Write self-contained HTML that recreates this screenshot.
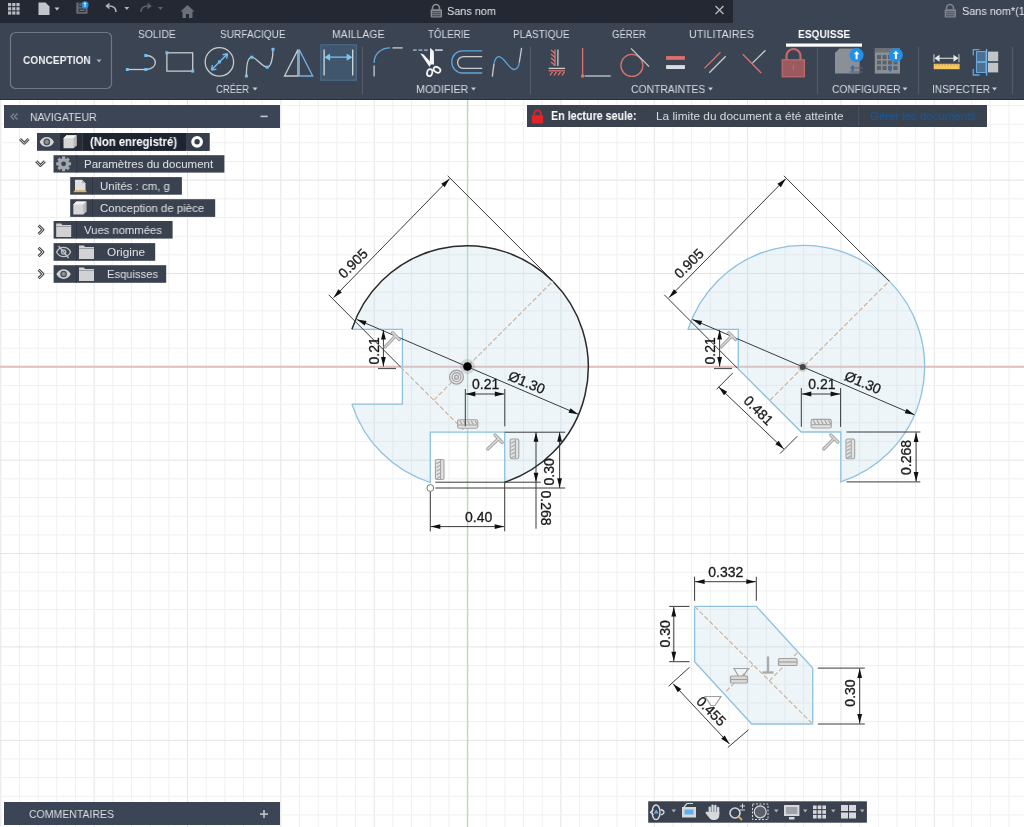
<!DOCTYPE html>
<html><head><meta charset="utf-8">
<style>
*{margin:0;padding:0;box-sizing:border-box}
html,body{width:1024px;height:827px;overflow:hidden;background:#fff;font-family:"Liberation Sans",sans-serif}
svg{position:absolute;left:0;top:0;overflow:visible}
div,svg{will-change:transform}
#topbar{position:absolute;left:0;top:0;width:1024px;height:23px;background:#3b4453}
#tabdark{position:absolute;left:0;top:0;width:733px;height:23px;background:#232833}
#toolbar{position:absolute;left:0;top:23px;width:1024px;height:77px;background:#3b4453;border-bottom:1px solid #2a303a}
.tt{position:absolute;top:5px;font-size:11.5px;line-height:12px;color:#e6e7e9;white-space:nowrap}
.tab{position:absolute;top:28.7px;font-size:11px;line-height:11px;color:#dadde2;white-space:nowrap;letter-spacing:0.1px}
.tab.act{color:#fff;font-weight:bold}
.grp{position:absolute;top:84px;font-size:11px;line-height:11px;color:#d8dbe0;white-space:nowrap}
.concep{position:absolute;left:22.6px;top:54.5px;font-size:11.5px;line-height:11px;font-weight:bold;color:#f0f1f3;white-space:nowrap}
.nvh{position:absolute;left:4px;top:105px;width:276px;height:22.7px;background:#3c4555}
.cmt{position:absolute;left:4px;top:802.3px;width:276px;height:22.9px;background:#3c4555}
.nvt{position:absolute;font-size:11.5px;line-height:12px;color:#dcdfe3;white-space:nowrap}
.nvr{position:absolute;font-size:11.5px;line-height:13px;color:#e0e2e5;white-space:nowrap}
.nvr.b{font-weight:bold;color:#fff;font-size:12px}
.ban{position:absolute;left:527px;top:105.2px;width:460px;height:21.8px;background:#3a4250}
.bt{position:absolute;top:109.5px;font-size:11.5px;line-height:13px;color:#d8dadd;white-space:nowrap}
.bt.b{font-weight:bold;color:#fff;font-size:12px}
.bt.lnk{color:#1b5a92}
</style></head><body>
<svg width="1024" height="827" viewBox="0 0 1024 827">
<line x1="0.80" y1="100" x2="0.80" y2="827" stroke="#e4e4e4"/>
<line x1="19.47" y1="100" x2="19.47" y2="827" stroke="#f0f0f0"/>
<line x1="38.14" y1="100" x2="38.14" y2="827" stroke="#f0f0f0"/>
<line x1="56.81" y1="100" x2="56.81" y2="827" stroke="#f0f0f0"/>
<line x1="75.48" y1="100" x2="75.48" y2="827" stroke="#f0f0f0"/>
<line x1="94.15" y1="100" x2="94.15" y2="827" stroke="#e4e4e4"/>
<line x1="112.82" y1="100" x2="112.82" y2="827" stroke="#f0f0f0"/>
<line x1="131.49" y1="100" x2="131.49" y2="827" stroke="#f0f0f0"/>
<line x1="150.16" y1="100" x2="150.16" y2="827" stroke="#f0f0f0"/>
<line x1="168.83" y1="100" x2="168.83" y2="827" stroke="#f0f0f0"/>
<line x1="187.50" y1="100" x2="187.50" y2="827" stroke="#e4e4e4"/>
<line x1="206.17" y1="100" x2="206.17" y2="827" stroke="#f0f0f0"/>
<line x1="224.84" y1="100" x2="224.84" y2="827" stroke="#f0f0f0"/>
<line x1="243.51" y1="100" x2="243.51" y2="827" stroke="#f0f0f0"/>
<line x1="262.18" y1="100" x2="262.18" y2="827" stroke="#f0f0f0"/>
<line x1="280.85" y1="100" x2="280.85" y2="827" stroke="#e4e4e4"/>
<line x1="299.52" y1="100" x2="299.52" y2="827" stroke="#f0f0f0"/>
<line x1="318.19" y1="100" x2="318.19" y2="827" stroke="#f0f0f0"/>
<line x1="336.86" y1="100" x2="336.86" y2="827" stroke="#f0f0f0"/>
<line x1="355.53" y1="100" x2="355.53" y2="827" stroke="#f0f0f0"/>
<line x1="374.20" y1="100" x2="374.20" y2="827" stroke="#e4e4e4"/>
<line x1="392.87" y1="100" x2="392.87" y2="827" stroke="#f0f0f0"/>
<line x1="411.54" y1="100" x2="411.54" y2="827" stroke="#f0f0f0"/>
<line x1="430.21" y1="100" x2="430.21" y2="827" stroke="#f0f0f0"/>
<line x1="448.88" y1="100" x2="448.88" y2="827" stroke="#f0f0f0"/>
<line x1="467.55" y1="100" x2="467.55" y2="827" stroke="#e4e4e4"/>
<line x1="486.22" y1="100" x2="486.22" y2="827" stroke="#f0f0f0"/>
<line x1="504.89" y1="100" x2="504.89" y2="827" stroke="#f0f0f0"/>
<line x1="523.56" y1="100" x2="523.56" y2="827" stroke="#f0f0f0"/>
<line x1="542.23" y1="100" x2="542.23" y2="827" stroke="#f0f0f0"/>
<line x1="560.90" y1="100" x2="560.90" y2="827" stroke="#e4e4e4"/>
<line x1="579.57" y1="100" x2="579.57" y2="827" stroke="#f0f0f0"/>
<line x1="598.24" y1="100" x2="598.24" y2="827" stroke="#f0f0f0"/>
<line x1="616.91" y1="100" x2="616.91" y2="827" stroke="#f0f0f0"/>
<line x1="635.58" y1="100" x2="635.58" y2="827" stroke="#f0f0f0"/>
<line x1="654.25" y1="100" x2="654.25" y2="827" stroke="#e4e4e4"/>
<line x1="672.92" y1="100" x2="672.92" y2="827" stroke="#f0f0f0"/>
<line x1="691.59" y1="100" x2="691.59" y2="827" stroke="#f0f0f0"/>
<line x1="710.26" y1="100" x2="710.26" y2="827" stroke="#f0f0f0"/>
<line x1="728.93" y1="100" x2="728.93" y2="827" stroke="#f0f0f0"/>
<line x1="747.60" y1="100" x2="747.60" y2="827" stroke="#e4e4e4"/>
<line x1="766.27" y1="100" x2="766.27" y2="827" stroke="#f0f0f0"/>
<line x1="784.94" y1="100" x2="784.94" y2="827" stroke="#f0f0f0"/>
<line x1="803.61" y1="100" x2="803.61" y2="827" stroke="#f0f0f0"/>
<line x1="822.28" y1="100" x2="822.28" y2="827" stroke="#f0f0f0"/>
<line x1="840.95" y1="100" x2="840.95" y2="827" stroke="#e4e4e4"/>
<line x1="859.62" y1="100" x2="859.62" y2="827" stroke="#f0f0f0"/>
<line x1="878.29" y1="100" x2="878.29" y2="827" stroke="#f0f0f0"/>
<line x1="896.96" y1="100" x2="896.96" y2="827" stroke="#f0f0f0"/>
<line x1="915.63" y1="100" x2="915.63" y2="827" stroke="#f0f0f0"/>
<line x1="934.30" y1="100" x2="934.30" y2="827" stroke="#e4e4e4"/>
<line x1="952.97" y1="100" x2="952.97" y2="827" stroke="#f0f0f0"/>
<line x1="971.64" y1="100" x2="971.64" y2="827" stroke="#f0f0f0"/>
<line x1="990.31" y1="100" x2="990.31" y2="827" stroke="#f0f0f0"/>
<line x1="1008.98" y1="100" x2="1008.98" y2="827" stroke="#f0f0f0"/>
<line x1="0" y1="105.47" x2="1024" y2="105.47" stroke="#f0f0f0"/>
<line x1="0" y1="124.14" x2="1024" y2="124.14" stroke="#f0f0f0"/>
<line x1="0" y1="142.81" x2="1024" y2="142.81" stroke="#f0f0f0"/>
<line x1="0" y1="161.48" x2="1024" y2="161.48" stroke="#f0f0f0"/>
<line x1="0" y1="180.15" x2="1024" y2="180.15" stroke="#e4e4e4"/>
<line x1="0" y1="198.82" x2="1024" y2="198.82" stroke="#f0f0f0"/>
<line x1="0" y1="217.49" x2="1024" y2="217.49" stroke="#f0f0f0"/>
<line x1="0" y1="236.16" x2="1024" y2="236.16" stroke="#f0f0f0"/>
<line x1="0" y1="254.83" x2="1024" y2="254.83" stroke="#f0f0f0"/>
<line x1="0" y1="273.50" x2="1024" y2="273.50" stroke="#e4e4e4"/>
<line x1="0" y1="292.17" x2="1024" y2="292.17" stroke="#f0f0f0"/>
<line x1="0" y1="310.84" x2="1024" y2="310.84" stroke="#f0f0f0"/>
<line x1="0" y1="329.51" x2="1024" y2="329.51" stroke="#f0f0f0"/>
<line x1="0" y1="348.18" x2="1024" y2="348.18" stroke="#f0f0f0"/>
<line x1="0" y1="366.85" x2="1024" y2="366.85" stroke="#e4e4e4"/>
<line x1="0" y1="385.52" x2="1024" y2="385.52" stroke="#f0f0f0"/>
<line x1="0" y1="404.19" x2="1024" y2="404.19" stroke="#f0f0f0"/>
<line x1="0" y1="422.86" x2="1024" y2="422.86" stroke="#f0f0f0"/>
<line x1="0" y1="441.53" x2="1024" y2="441.53" stroke="#f0f0f0"/>
<line x1="0" y1="460.20" x2="1024" y2="460.20" stroke="#e4e4e4"/>
<line x1="0" y1="478.87" x2="1024" y2="478.87" stroke="#f0f0f0"/>
<line x1="0" y1="497.54" x2="1024" y2="497.54" stroke="#f0f0f0"/>
<line x1="0" y1="516.21" x2="1024" y2="516.21" stroke="#f0f0f0"/>
<line x1="0" y1="534.88" x2="1024" y2="534.88" stroke="#f0f0f0"/>
<line x1="0" y1="553.55" x2="1024" y2="553.55" stroke="#e4e4e4"/>
<line x1="0" y1="572.22" x2="1024" y2="572.22" stroke="#f0f0f0"/>
<line x1="0" y1="590.89" x2="1024" y2="590.89" stroke="#f0f0f0"/>
<line x1="0" y1="609.56" x2="1024" y2="609.56" stroke="#f0f0f0"/>
<line x1="0" y1="628.23" x2="1024" y2="628.23" stroke="#f0f0f0"/>
<line x1="0" y1="646.90" x2="1024" y2="646.90" stroke="#e4e4e4"/>
<line x1="0" y1="665.57" x2="1024" y2="665.57" stroke="#f0f0f0"/>
<line x1="0" y1="684.24" x2="1024" y2="684.24" stroke="#f0f0f0"/>
<line x1="0" y1="702.91" x2="1024" y2="702.91" stroke="#f0f0f0"/>
<line x1="0" y1="721.58" x2="1024" y2="721.58" stroke="#f0f0f0"/>
<line x1="0" y1="740.25" x2="1024" y2="740.25" stroke="#e4e4e4"/>
<line x1="0" y1="758.92" x2="1024" y2="758.92" stroke="#f0f0f0"/>
<line x1="0" y1="777.59" x2="1024" y2="777.59" stroke="#f0f0f0"/>
<line x1="0" y1="796.26" x2="1024" y2="796.26" stroke="#f0f0f0"/>
<line x1="0" y1="814.93" x2="1024" y2="814.93" stroke="#f0f0f0"/>
<line x1="0" y1="366.85" x2="1024" y2="366.85" stroke="#e3bdbd" stroke-width="2"/>
<line x1="467.55" y1="100" x2="467.55" y2="827" stroke="#b6dcb6" stroke-width="1.4"/>
<g font-family="Liberation Sans, sans-serif"><path d="M351.9,329.3 A121.2,121.2 0 1 1 504.7,482.2 L504.7,432.2 L430.3,432.2 L430.3,482.5 A121.2,121.2 0 0 1 351.9,404.1 L402.4,404.1 L402.4,329.3 Z" fill="#b7d7e7" fill-opacity="0.25"/>
<path d="M351.9,329.3 H402.4 V404.1 H351.9" fill="none" stroke="#8fc2de" stroke-width="1.3"/>
<path d="M351.9,404.1 A121.2,121.2 0 0 0 430.3,482.5 V432.2 H504.7 V482.2" fill="none" stroke="#8fc2de" stroke-width="1.3"/>
<path d="M351.9,329.3 A121.2,121.2 0 1 1 504.7,482.2" fill="none" stroke="#2a2a2a" stroke-width="1.5"/>
<line x1="433.80" y1="400.20" x2="553.20" y2="280.80" stroke="#ffffff" stroke-width="2.6" stroke-opacity="0.3"/><line x1="433.80" y1="400.20" x2="553.20" y2="280.80" stroke="#cfb7a1" stroke-width="1.3" stroke-dasharray="5 2"/>
<line x1="400.50" y1="366.90" x2="464.60" y2="431.00" stroke="#ffffff" stroke-width="2.6" stroke-opacity="0.3"/><line x1="400.50" y1="366.90" x2="464.60" y2="431.00" stroke="#cfb7a1" stroke-width="1.3" stroke-dasharray="5 2"/>
<g fill="none" stroke="#a2a2a2" stroke-width="1.1"><rect x="457.6" y="419.8" width="20.2" height="8.4" rx="1.6" fill="#e2e2e2"/><line x1="458.2" y1="425.0" x2="477.2" y2="425.0"/><line x1="459.8" y1="420.8" x2="462.0" y2="424.4"/><line x1="463.6" y1="420.8" x2="465.8" y2="424.4"/><line x1="467.4" y1="420.8" x2="469.6" y2="424.4"/><line x1="471.2" y1="420.8" x2="473.4" y2="424.4"/><line x1="475.0" y1="420.8" x2="477.2" y2="424.4"/></g>
<g fill="none" stroke="#a2a2a2" stroke-width="1.1"><rect x="510.2" y="439.0" width="8.6" height="19.7" rx="1.6" fill="#e2e2e2"/><line x1="515.4" y1="439.6" x2="515.4" y2="458.1"/><line x1="511.2" y1="443.4" x2="514.7" y2="441.2"/><line x1="511.2" y1="447.1" x2="514.7" y2="444.9"/><line x1="511.2" y1="450.8" x2="514.7" y2="448.6"/><line x1="511.2" y1="454.4" x2="514.7" y2="452.2"/><line x1="511.2" y1="458.1" x2="514.7" y2="455.9"/></g>
<g fill="none" stroke="#a2a2a2" stroke-width="1.1"><rect x="435.4" y="459.5" width="8.6" height="20" rx="1.6" fill="#e2e2e2"/><line x1="440.6" y1="460.1" x2="440.6" y2="478.9"/><line x1="436.4" y1="463.9" x2="439.9" y2="461.7"/><line x1="436.4" y1="467.6" x2="439.9" y2="465.4"/><line x1="436.4" y1="471.4" x2="439.9" y2="469.2"/><line x1="436.4" y1="475.1" x2="439.9" y2="472.9"/><line x1="436.4" y1="478.9" x2="439.9" y2="476.7"/></g>
<line x1="328.70" y1="294.80" x2="400.50" y2="366.90" stroke="#3a3a3a" stroke-width="1" />
<line x1="447.70" y1="175.80" x2="553.20" y2="281.30" stroke="#3a3a3a" stroke-width="1" />
<line x1="333.50" y1="297.70" x2="449.60" y2="178.70" stroke="#3a3a3a" stroke-width="1"/><path d="M333.50,297.70 L338.42,289.22 L341.85,292.58 Z" fill="#111"/><path d="M449.60,178.70 L444.68,187.18 L441.25,183.82 Z" fill="#111"/>
<text x="0" y="0" transform="translate(352.90,263.30) rotate(-45)" text-anchor="middle" dominant-baseline="central" font-size="14" fill="#1a1a1a" stroke="#1a1a1a" stroke-width="0.3">0.905</text>
<line x1="356.90" y1="319.50" x2="578.20" y2="414.20" stroke="#3a3a3a" stroke-width="1"/><path d="M356.90,319.50 L366.58,321.03 L364.69,325.44 Z" fill="#111"/><path d="M578.20,414.20 L568.52,412.67 L570.41,408.26 Z" fill="#111"/>
<text x="0" y="0" transform="translate(526.80,382.30) rotate(23.2)" text-anchor="middle" dominant-baseline="central" font-size="14" fill="#1a1a1a" stroke="#1a1a1a" stroke-width="0.3">Ø1.30</text>
<line x1="383.40" y1="330.00" x2="383.40" y2="366.50" stroke="#3a3a3a" stroke-width="1" />
<path d="M383.40,330.00 L385.80,339.50 L381.00,339.50 Z" fill="#111"/>
<path d="M383.40,366.50 L381.00,357.00 L385.80,357.00 Z" fill="#111"/>
<line x1="378.00" y1="368.50" x2="396.00" y2="368.50" stroke="#555" stroke-width="1.2" />
<text x="0" y="0" transform="translate(373.90,350.80) rotate(-90)" text-anchor="middle" dominant-baseline="central" font-size="14" fill="#1a1a1a" stroke="#1a1a1a" stroke-width="0.3">0.21</text>
<path d="M385.1,346.9 L395.4,336.1 M392.5,332.7 L399.3,339.5" stroke="#a6a6a6" stroke-width="3.3" stroke-linecap="round" fill="none"/><path d="M385.1,346.9 L395.4,336.1 M392.5,332.7 L399.3,339.5" stroke="#dcdcdc" stroke-width="1.3" stroke-linecap="round" fill="none"/>
<line x1="465.30" y1="389.00" x2="465.30" y2="426.30" stroke="#3a3a3a" stroke-width="1" />
<line x1="504.80" y1="389.00" x2="504.80" y2="426.30" stroke="#3a3a3a" stroke-width="1" />
<line x1="465.80" y1="394.00" x2="504.30" y2="394.00" stroke="#3a3a3a" stroke-width="1"/><path d="M465.80,394.00 L475.30,391.60 L475.30,396.40 Z" fill="#111"/><path d="M504.30,394.00 L494.80,396.40 L494.80,391.60 Z" fill="#111"/>
<text x="0" y="0" transform="translate(485.70,384.20) rotate(0)" text-anchor="middle" dominant-baseline="central" font-size="14" fill="#1a1a1a" stroke="#1a1a1a" stroke-width="0.3">0.21</text>
<line x1="504.70" y1="432.20" x2="565.20" y2="432.20" stroke="#3a3a3a" stroke-width="1" />
<line x1="435.40" y1="482.20" x2="540.60" y2="482.20" stroke="#3a3a3a" stroke-width="1" />
<line x1="435.40" y1="488.00" x2="565.20" y2="488.00" stroke="#3a3a3a" stroke-width="1" />
<line x1="536.00" y1="432.30" x2="536.00" y2="528.70" stroke="#3a3a3a" stroke-width="1" />
<path d="M536.00,432.30 L538.40,441.80 L533.60,441.80 Z" fill="#111"/>
<path d="M536.00,482.20 L533.60,472.70 L538.40,472.70 Z" fill="#111"/>
<line x1="559.60" y1="432.30" x2="559.60" y2="487.80" stroke="#3a3a3a" stroke-width="1"/><path d="M559.60,432.30 L562.00,441.80 L557.20,441.80 Z" fill="#111"/><path d="M559.60,487.80 L557.20,478.30 L562.00,478.30 Z" fill="#111"/>
<text x="0" y="0" transform="translate(549.20,471.90) rotate(-90)" text-anchor="middle" dominant-baseline="central" font-size="14" fill="#1a1a1a" stroke="#1a1a1a" stroke-width="0.3">0.30</text>
<text x="0" y="0" transform="translate(546.00,508.00) rotate(90)" text-anchor="middle" dominant-baseline="central" font-size="14" fill="#1a1a1a" stroke="#1a1a1a" stroke-width="0.3">0.268</text>
<line x1="430.30" y1="491.00" x2="430.30" y2="531.30" stroke="#3a3a3a" stroke-width="1" />
<line x1="504.70" y1="482.20" x2="504.70" y2="531.30" stroke="#3a3a3a" stroke-width="1" />
<line x1="430.80" y1="526.60" x2="504.20" y2="526.60" stroke="#3a3a3a" stroke-width="1"/><path d="M430.80,526.60 L440.30,524.20 L440.30,529.00 Z" fill="#111"/><path d="M504.20,526.60 L494.70,529.00 L494.70,524.20 Z" fill="#111"/>
<text x="0" y="0" transform="translate(478.60,516.60) rotate(0)" text-anchor="middle" dominant-baseline="central" font-size="14" fill="#1a1a1a" stroke="#1a1a1a" stroke-width="0.3">0.40</text>
<circle cx="430.3" cy="488" r="3.4" fill="#fff" stroke="#777" stroke-width="1"/>
<path d="M487.8,449 L498,439.3 M495,435 L502.2,442.5" stroke="#a6a6a6" stroke-width="3.3" stroke-linecap="round" fill="none"/><path d="M487.8,449 L498,439.3 M495,435 L502.2,442.5" stroke="#dcdcdc" stroke-width="1.3" stroke-linecap="round" fill="none"/>
<circle cx="467.5" cy="366.5" r="7.5" fill="#9a9a9a" fill-opacity="0.35"/>
<circle cx="467.5" cy="366.5" r="4.3" fill="#000"/>
<g fill="none" stroke="#a3a3a3" stroke-width="1.4"><circle cx="456.5" cy="377.2" r="6.9" fill="#ececec" fill-opacity="0.6"/><circle cx="456.5" cy="377.2" r="4.4"/><circle cx="456.5" cy="377.2" r="1.9"/></g><path d="M688.1,329.3 A121.2,121.2 0 1 1 840.8,481.9 L840.8,432 L801.2,432 L738.3,369 L738.3,329.3 Z" fill="#b7d7e7" fill-opacity="0.25" stroke="#8fc2de" stroke-width="1.3"/>
<line x1="769.90" y1="400.30" x2="889.40" y2="280.80" stroke="#ffffff" stroke-width="2.6" stroke-opacity="0.3"/><line x1="769.90" y1="400.30" x2="889.40" y2="280.80" stroke="#cfb7a1" stroke-width="1.3" stroke-dasharray="5 2"/>
<line x1="664.30" y1="294.80" x2="737.60" y2="368.40" stroke="#3a3a3a" stroke-width="1" />
<line x1="783.90" y1="175.80" x2="889.40" y2="281.30" stroke="#3a3a3a" stroke-width="1" />
<line x1="668.90" y1="297.70" x2="785.80" y2="178.70" stroke="#3a3a3a" stroke-width="1"/><path d="M668.90,297.70 L673.85,289.24 L677.27,292.60 Z" fill="#111"/><path d="M785.80,178.70 L780.85,187.16 L777.43,183.80 Z" fill="#111"/>
<text x="0" y="0" transform="translate(688.90,263.30) rotate(-45)" text-anchor="middle" dominant-baseline="central" font-size="14" fill="#1a1a1a" stroke="#1a1a1a" stroke-width="0.3">0.905</text>
<line x1="692.50" y1="319.50" x2="914.40" y2="414.80" stroke="#3a3a3a" stroke-width="1"/><path d="M692.50,319.50 L702.18,321.04 L700.28,325.45 Z" fill="#111"/><path d="M914.40,414.80 L904.72,413.26 L906.62,408.85 Z" fill="#111"/>
<text x="0" y="0" transform="translate(862.90,382.30) rotate(23.2)" text-anchor="middle" dominant-baseline="central" font-size="14" fill="#1a1a1a" stroke="#1a1a1a" stroke-width="0.3">Ø1.30</text>
<line x1="719.60" y1="330.00" x2="719.60" y2="366.50" stroke="#3a3a3a" stroke-width="1" />
<path d="M719.60,330.00 L722.00,339.50 L717.20,339.50 Z" fill="#111"/>
<path d="M719.60,366.50 L717.20,357.00 L722.00,357.00 Z" fill="#111"/>
<line x1="714.00" y1="368.50" x2="732.00" y2="368.50" stroke="#555" stroke-width="1.2" />
<text x="0" y="0" transform="translate(710.10,350.80) rotate(-90)" text-anchor="middle" dominant-baseline="central" font-size="14" fill="#1a1a1a" stroke="#1a1a1a" stroke-width="0.3">0.21</text>
<path d="M721.3,346.9 L731.6,336.1 M728.7,332.7 L735.5,339.5" stroke="#a6a6a6" stroke-width="3.3" stroke-linecap="round" fill="none"/><path d="M721.3,346.9 L731.6,336.1 M728.7,332.7 L735.5,339.5" stroke="#dcdcdc" stroke-width="1.3" stroke-linecap="round" fill="none"/>
<line x1="732.80" y1="372.90" x2="716.60" y2="389.30" stroke="#3a3a3a" stroke-width="1" />
<line x1="797.30" y1="436.20" x2="780.00" y2="453.60" stroke="#3a3a3a" stroke-width="1" />
<line x1="718.70" y1="387.00" x2="783.90" y2="449.00" stroke="#3a3a3a" stroke-width="1"/><path d="M718.70,387.00 L727.24,391.81 L723.93,395.29 Z" fill="#111"/><path d="M783.90,449.00 L775.36,444.19 L778.67,440.71 Z" fill="#111"/>
<text x="0" y="0" transform="translate(758.60,410.40) rotate(45)" text-anchor="middle" dominant-baseline="central" font-size="14" fill="#1a1a1a" stroke="#1a1a1a" stroke-width="0.3">0.481</text>
<line x1="801.30" y1="388.10" x2="801.30" y2="426.80" stroke="#3a3a3a" stroke-width="1" />
<line x1="840.60" y1="388.10" x2="840.60" y2="426.80" stroke="#3a3a3a" stroke-width="1" />
<line x1="801.80" y1="394.00" x2="840.10" y2="394.00" stroke="#3a3a3a" stroke-width="1"/><path d="M801.80,394.00 L811.30,391.60 L811.30,396.40 Z" fill="#111"/><path d="M840.10,394.00 L830.60,396.40 L830.60,391.60 Z" fill="#111"/>
<text x="0" y="0" transform="translate(821.90,384.20) rotate(0)" text-anchor="middle" dominant-baseline="central" font-size="14" fill="#1a1a1a" stroke="#1a1a1a" stroke-width="0.3">0.21</text>
<line x1="846.50" y1="432.00" x2="920.30" y2="432.00" stroke="#3a3a3a" stroke-width="1" />
<line x1="846.50" y1="481.90" x2="920.30" y2="481.90" stroke="#3a3a3a" stroke-width="1" />
<line x1="916.10" y1="432.50" x2="916.10" y2="481.40" stroke="#3a3a3a" stroke-width="1"/><path d="M916.10,432.50 L918.50,442.00 L913.70,442.00 Z" fill="#111"/><path d="M916.10,481.40 L913.70,471.90 L918.50,471.90 Z" fill="#111"/>
<text x="0" y="0" transform="translate(906.20,457.50) rotate(-90)" text-anchor="middle" dominant-baseline="central" font-size="14" fill="#1a1a1a" stroke="#1a1a1a" stroke-width="0.3">0.268</text>
<g fill="none" stroke="#a2a2a2" stroke-width="1.1"><rect x="811.1" y="419.4" width="20.2" height="8.6" rx="1.6" fill="#e2e2e2"/><line x1="811.7" y1="424.7" x2="830.7" y2="424.7"/><line x1="813.3" y1="420.4" x2="815.5" y2="424.1"/><line x1="817.1" y1="420.4" x2="819.3" y2="424.1"/><line x1="820.9" y1="420.4" x2="823.1" y2="424.1"/><line x1="824.7" y1="420.4" x2="826.9" y2="424.1"/><line x1="828.5" y1="420.4" x2="830.7" y2="424.1"/></g>
<g fill="none" stroke="#a2a2a2" stroke-width="1.1"><rect x="846.0" y="439.0" width="8.7" height="19.8" rx="1.6" fill="#e2e2e2"/><line x1="851.2" y1="439.6" x2="851.2" y2="458.2"/><line x1="847.0" y1="443.4" x2="850.5" y2="441.2"/><line x1="847.0" y1="447.1" x2="850.5" y2="444.9"/><line x1="847.0" y1="450.8" x2="850.5" y2="448.6"/><line x1="847.0" y1="454.5" x2="850.5" y2="452.3"/><line x1="847.0" y1="458.2" x2="850.5" y2="456.0"/></g>
<path d="M823.8,449 L834,438.6 M830.8,435 L837.8,442" stroke="#a6a6a6" stroke-width="3.3" stroke-linecap="round" fill="none"/><path d="M823.8,449 L834,438.6 M830.8,435 L837.8,442" stroke="#dcdcdc" stroke-width="1.3" stroke-linecap="round" fill="none"/>
<circle cx="802.7" cy="367.0" r="5" fill="#888" fill-opacity="0.3"/>
<circle cx="802.7" cy="367.0" r="3" fill="#444"/><path d="M694.6,606.4 L756.3,606.4 L812.7,668.1 L812.7,724 L751.7,724 L694.6,661.7 Z" fill="#b7d7e7" fill-opacity="0.25" stroke="#8fc2de" stroke-width="1.3"/>
<line x1="694.60" y1="606.40" x2="812.70" y2="724.00" stroke="#ffffff" stroke-width="2.6" stroke-opacity="0.3"/><line x1="694.60" y1="606.40" x2="812.70" y2="724.00" stroke="#cfb7a1" stroke-width="1.3" stroke-dasharray="5 2"/>
<line x1="726.10" y1="691.20" x2="753.00" y2="664.90" stroke="#ffffff" stroke-width="2.6" stroke-opacity="0.3"/><line x1="726.10" y1="691.20" x2="753.00" y2="664.90" stroke="#cfb7a1" stroke-width="1.3" stroke-dasharray="5 2"/>
<line x1="769.10" y1="681.00" x2="797.60" y2="652.50" stroke="#ffffff" stroke-width="2.6" stroke-opacity="0.3"/><line x1="769.10" y1="681.00" x2="797.60" y2="652.50" stroke="#cfb7a1" stroke-width="1.3" stroke-dasharray="5 2"/>
<line x1="694.60" y1="576.70" x2="694.60" y2="600.80" stroke="#3a3a3a" stroke-width="1" />
<line x1="756.30" y1="576.70" x2="756.30" y2="600.80" stroke="#3a3a3a" stroke-width="1" />
<line x1="695.10" y1="581.70" x2="755.80" y2="581.70" stroke="#3a3a3a" stroke-width="1"/><path d="M695.10,581.70 L704.60,579.30 L704.60,584.10 Z" fill="#111"/><path d="M755.80,581.70 L746.30,584.10 L746.30,579.30 Z" fill="#111"/>
<text x="0" y="0" transform="translate(725.80,572.20) rotate(0)" text-anchor="middle" dominant-baseline="central" font-size="14" fill="#1a1a1a" stroke="#1a1a1a" stroke-width="0.3">0.332</text>
<line x1="669.20" y1="606.40" x2="689.50" y2="606.40" stroke="#3a3a3a" stroke-width="1" />
<line x1="669.20" y1="661.70" x2="689.50" y2="661.70" stroke="#3a3a3a" stroke-width="1" />
<line x1="673.80" y1="606.90" x2="673.80" y2="661.20" stroke="#3a3a3a" stroke-width="1"/><path d="M673.80,606.90 L676.20,616.40 L671.40,616.40 Z" fill="#111"/><path d="M673.80,661.20 L671.40,651.70 L676.20,651.70 Z" fill="#111"/>
<text x="0" y="0" transform="translate(665.40,633.80) rotate(-90)" text-anchor="middle" dominant-baseline="central" font-size="14" fill="#1a1a1a" stroke="#1a1a1a" stroke-width="0.3">0.30</text>
<line x1="817.80" y1="668.10" x2="864.80" y2="668.10" stroke="#3a3a3a" stroke-width="1" />
<line x1="817.80" y1="724.00" x2="864.80" y2="724.00" stroke="#3a3a3a" stroke-width="1" />
<line x1="859.70" y1="668.60" x2="859.70" y2="723.50" stroke="#3a3a3a" stroke-width="1"/><path d="M859.70,668.60 L862.10,678.10 L857.30,678.10 Z" fill="#111"/><path d="M859.70,723.50 L857.30,714.00 L862.10,714.00 Z" fill="#111"/>
<text x="0" y="0" transform="translate(850.30,693.00) rotate(-90)" text-anchor="middle" dominant-baseline="central" font-size="14" fill="#1a1a1a" stroke="#1a1a1a" stroke-width="0.3">0.30</text>
<line x1="689.50" y1="667.30" x2="668.60" y2="686.20" stroke="#3a3a3a" stroke-width="1" />
<line x1="748.50" y1="729.80" x2="727.80" y2="747.50" stroke="#3a3a3a" stroke-width="1" />
<line x1="673.00" y1="683.70" x2="729.50" y2="744.00" stroke="#3a3a3a" stroke-width="1"/><path d="M673.00,683.70 L681.25,688.99 L677.74,692.27 Z" fill="#111"/><path d="M729.50,744.00 L721.25,738.71 L724.76,735.43 Z" fill="#111"/>
<text x="0" y="0" transform="translate(711.30,711.20) rotate(45)" text-anchor="middle" dominant-baseline="central" font-size="14" fill="#1a1a1a" stroke="#1a1a1a" stroke-width="0.3">0.455</text>
<g fill="none" stroke="#a0a0a0" stroke-width="1.2"><path d="M734,668.5 h14 l-5,8.5 h-4 z"/><rect x="730.5" y="676" width="17" height="7" rx="1" fill="#dcdcdc"/><line x1="731" y1="679.5" x2="747" y2="679.5"/><path d="M705,696.5 h16 l-6,9 h-4 z"/><rect x="778.5" y="658.5" width="18.5" height="7" rx="1" fill="#dcdcdc"/><line x1="779" y1="662" x2="796.5" y2="662"/></g>
<g stroke="#ababab" stroke-width="2.4"><line x1="768" y1="656.5" x2="768" y2="672"/><line x1="762.5" y1="672.5" x2="773.5" y2="672.5"/></g></g>
</svg>
<div id="topbar"></div>
<div id="tabdark"></div>
<div id="toolbar"></div>

<svg width="1024" height="100" viewBox="0 0 1024 100" style="position:absolute;left:0;top:0">
<!-- top bar icons -->
<g fill="#b9bdc3">
<rect x="8.0" y="3.0" width="3.2" height="3.2"/><rect x="8.0" y="7.2" width="3.2" height="3.2"/><rect x="8.0" y="11.4" width="3.2" height="3.2"/><rect x="12.2" y="3.0" width="3.2" height="3.2"/><rect x="12.2" y="7.2" width="3.2" height="3.2"/><rect x="12.2" y="11.4" width="3.2" height="3.2"/><rect x="16.4" y="3.0" width="3.2" height="3.2"/><rect x="16.4" y="7.2" width="3.2" height="3.2"/><rect x="16.4" y="11.4" width="3.2" height="3.2"/>
</g>
<path d="M38.5,2.5 h7 l4,4 v8.5 h-11 z" fill="#c3c6cb"/>
<path d="M54.5,7.5 h5 l-2.5,3 z" fill="#c3c6cb"/>
<path d="M76.3,2.5 h8.5 l2.7,2.7 v8.5 h-11.2 z" fill="#666b74"/>
<rect x="78.6" y="2.5" width="6" height="4.6" fill="#232833"/>
<rect x="79.3" y="3.3" width="1.6" height="3" fill="#666b74"/>
<rect x="78.6" y="8.6" width="7" height="3.3" fill="#232833"/>
<rect x="79.4" y="9.5" width="5.4" height="1.5" fill="#666b74"/>
<circle cx="85" cy="4.8" r="3.6" fill="#2a8ee0"/>
<path d="M85,2.8 v4.2 M83.8,4 l1.2,-1.3 1.2,1.3" stroke="#fff" stroke-width="0.9" fill="none"/>
<path d="M116,12 q0,-6 -7,-6 h-2 m2.5,-2.5 l-3,2.5 3,2.5" stroke="#b0b4ba" stroke-width="1.6" fill="none"/>
<path d="M124.3,7 h5 l-2.5,3 z" fill="#b0b4ba"/>
<path d="M141,12 q0,-6 7,-6 h2 m-2.5,-2.5 l3,2.5 -3,2.5" stroke="#5e636b" stroke-width="1.6" fill="none"/>
<path d="M158,7 h5 l-2.5,3 z" fill="#5e636b"/>
<path d="M187.5,5 l7,6.5 h-2 v6.5 h-3.5 v-4 h-3 v4 h-3.5 v-6.5 h-2 z" fill="#6b7078"/>
<!-- tab lock -->
<path d="M432.5,9.5 v-1.5 a3.5,3.5 0 0 1 7,0 v1.5" stroke="#8a8e95" stroke-width="1.6" fill="none"/>
<rect x="430.7" y="9.3" width="11.3" height="8.3" rx="1" fill="#8a8e95"/>
<g stroke="#1f232b" stroke-width="0.8"><line x1="432" y1="11.8" x2="440.7" y2="11.8"/><line x1="432" y1="13.8" x2="440.7" y2="13.8"/><line x1="432" y1="15.8" x2="440.7" y2="15.8"/></g>
<path d="M715.5,6 l8,8 m0,-8 l-8,8" stroke="#b4b8be" stroke-width="1.4"/>
<path d="M946.5,9.5 v-1.5 a3.5,3.5 0 0 1 7,0 v1.5" stroke="#80858d" stroke-width="1.6" fill="none"/>
<rect x="944.7" y="9.3" width="11.3" height="8.3" rx="1" fill="#80858d"/>
<g stroke="#3c4453" stroke-width="0.8"><line x1="946" y1="11.8" x2="954.7" y2="11.8"/><line x1="946" y1="13.8" x2="954.7" y2="13.8"/><line x1="946" y1="15.8" x2="954.7" y2="15.8"/></g>

<!-- conception box -->
<rect x="10.5" y="32.5" width="101" height="56" rx="5" fill="none" stroke="#6e7889" stroke-width="1.2"/>
<path d="M96.5,59.5 h5 l-2.5,3 z" fill="#a9aeb5"/>
<!-- esquisse underline -->
<rect x="786" y="43.5" width="76" height="3.2" fill="#ffffff"/>
<!-- separators -->
<g stroke="#535b6a" stroke-width="1.2">
<line x1="362.5" y1="47" x2="362.5" y2="94"/>
<line x1="530.5" y1="47" x2="530.5" y2="94"/>
<line x1="817.5" y1="48" x2="817.5" y2="94"/>
<line x1="918.5" y1="47" x2="918.5" y2="94"/>
<line x1="1012.5" y1="47" x2="1012.5" y2="94"/>
</g>
<!-- creer icons -->
<g fill="none" stroke="#c9cbce" stroke-width="1.3">
<line x1="127.3" y1="69.5" x2="145.8" y2="69.5"/>
<path d="M145.8,55.5 C158.5,55.5 158.5,69.5 145.8,69.5"/>
<rect x="166.9" y="52.8" width="25.8" height="18.3"/>
<circle cx="219.4" cy="61.9" r="14.2"/>
<path d="M246.4,76 C246.4,66 248,57.2 251.7,57.2 C256,57.2 262,67.2 267.2,67.2 C271,67.2 273,58 273,49.3"/>
<path d="M298,49.6 L284.5,76 H298 Z"/>
</g>
<path d="M299.2,49.6 L312.7,76 H299.2 Z" fill="none" stroke="#6fb3e6" stroke-width="1.3"/>
<g fill="#6fc0f0">
<rect x="125.8" y="68" width="3" height="3"/><rect x="144.3" y="68" width="3" height="3"/><rect x="144.3" y="54" width="3" height="3"/>
<rect x="165.4" y="51.3" width="3" height="3"/><rect x="191.2" y="69.6" width="3" height="3"/>
<rect x="217.9" y="60.4" width="3" height="3"/>
<rect x="244.9" y="74.5" width="3" height="3"/><rect x="250.2" y="55.7" width="3" height="3"/><rect x="265.7" y="65.7" width="3" height="3"/><rect x="271.5" y="47.8" width="3" height="3"/>
</g>
<path d="M211.4,70.1 L227.6,53.7 M211.4,70.1 l1,-5 m-1,5 l5,-1 M227.6,53.7 l-5,1 m5,-1 l-1,5" stroke="#6fc0f0" stroke-width="1.4" fill="none"/>
<rect x="320.8" y="44.8" width="35.6" height="35.4" fill="#3f566d" stroke="#4f6f8e" stroke-width="1"/>
<g stroke="#d8dadc" stroke-width="1.3"><line x1="324.1" y1="49.6" x2="324.1" y2="75.4"/><line x1="352.7" y1="49.6" x2="352.7" y2="75.4"/></g>
<path d="M325.5,57.2 H351.3 M325.5,57.2 l4,-2.5 v5 z M351.3,57.2 l-4,-2.5 v5 z" stroke="#7cc6f2" stroke-width="1.2" fill="#7cc6f2"/>
<!-- modifier icons -->
<line x1="374.1" y1="65.4" x2="374.1" y2="76.6" stroke="#c9cbce" stroke-width="1.3"/>
<path d="M374.1,63 C374.1,54 381,47.9 390.2,47.9" stroke="#5fa6dc" stroke-width="1.3" fill="none"/>
<line x1="392.5" y1="47.9" x2="402.7" y2="47.9" stroke="#c9cbce" stroke-width="1.3"/>
<path d="M413,50.1 h3.7 m1.8,0 h3.9 m1.7,0 h3.7" stroke="#8aa0b8" stroke-width="1.7"/>
<path d="M435,50.1 h7.7" stroke="#c9cbce" stroke-width="1.7"/>
<path d="M420.2,53.2 L423.6,54.6 L432.6,64.3 L429.4,66.8 Z" fill="#f6f6f6"/>
<path d="M430.2,47.8 L433.8,51.2 L434,64.8 L429.8,63.2 Z" fill="#f6f6f6"/>
<circle cx="431.3" cy="65.3" r="0.9" fill="#2a2f38"/>
<ellipse cx="429.7" cy="72.6" rx="2.6" ry="3.6" fill="none" stroke="#f6f6f6" stroke-width="1.7" transform="rotate(15 429.7 72.6)"/>
<ellipse cx="437" cy="69.8" rx="3.6" ry="2.6" fill="none" stroke="#f6f6f6" stroke-width="1.7" transform="rotate(30 437 69.8)"/>
<path d="M482.2,50.8 H462.3 A10.5,11.1 0 0 0 462.3,73 H482.2" stroke="#5fa6dc" stroke-width="1.3" fill="none"/>
<path d="M482.2,56.6 H463.5 A5.9,5.9 0 0 0 463.5,68.4 H482.2" stroke="#c9cbce" stroke-width="1.3" fill="none"/>
<path d="M492.3,76.6 L494,63.7" stroke="#c9cbce" stroke-width="1.3"/>
<path d="M494,63.7 C495,58 497,56.6 499,56.6 C504,56.6 509,69.5 514,69.5 C517,69.5 519,66 519.3,62.5" stroke="#5fa6dc" stroke-width="1.3" fill="none"/>
<path d="M519.3,62.5 L521.6,47.9" stroke="#c9cbce" stroke-width="1.3"/>
<!-- contraintes icons -->
<g stroke="#d9736f" stroke-width="1.3" fill="none">
<line x1="555" y1="49.6" x2="555" y2="66"/>
<path d="M551,50 l4,3.5 M551,54 l4,3.5 M551,58 l4,3.5 M551,62 l4,3.5"/>
<line x1="548.6" y1="70.8" x2="565" y2="70.8"/>
<path d="M550,75.4 l2.5,-3.5 M554,75.4 l2.5,-3.5 M558,75.4 l2.5,-3.5 M562,75.4 l2.5,-3.5"/>
<line x1="582.6" y1="47.9" x2="582.6" y2="75"/>
<circle cx="631.9" cy="65.4" r="11"/>
<line x1="704.4" y1="68.4" x2="720.5" y2="52.3"/>
<line x1="742.8" y1="54.3" x2="761.2" y2="73"/>
</g>
<g stroke="#c9cbce" stroke-width="1.3">
<line x1="557.9" y1="49.6" x2="557.9" y2="66"/>
<line x1="548.6" y1="68.4" x2="565" y2="68.4"/>
<line x1="584.7" y1="76" x2="610.7" y2="76"/>
<line x1="631" y1="48.4" x2="649.1" y2="66.6"/>
<line x1="709.3" y1="72.7" x2="725.7" y2="56.3"/>
<line x1="752.4" y1="63.1" x2="765.5" y2="50.2"/>
</g>
<circle cx="582.6" cy="76" r="1.8" fill="#e0706c"/>
<rect x="666.1" y="56.1" width="18.8" height="3.7" fill="#e0706c"/>
<rect x="666.1" y="65.1" width="18.8" height="3.9" fill="#dcdde0"/>
<path d="M786.5,60 v-4 a7,7 0 0 1 14,0 v4" stroke="#c46b6d" stroke-width="2.2" fill="none"/>
<rect x="782.2" y="59.8" width="22.2" height="17" fill="#9b5a5e" stroke="#c46b6d" stroke-width="1.2"/>
<line x1="793.3" y1="65" x2="793.3" y2="70" stroke="#c46b6d" stroke-width="1.2"/>
<!-- configurer -->
<path d="M839,48.4 H859.6 V73.4 H835 V52.4 Z" fill="#8b8f96"/>
<g stroke="#343b48" stroke-width="0.8"><line x1="835" y1="52.4" x2="839" y2="48.4"/></g>
<path d="M850,68 H863 M850,72 H863" stroke="#5a6069" stroke-width="1"/>
<rect x="851.5" y="65.5" width="2.2" height="6" rx="1" fill="#2a6fb0"/>
<circle cx="856.6" cy="55.1" r="7" fill="#2190e8"/>
<path d="M856.6,51 l-2.8,3.2 h1.8 v5 h2 v-5 h1.8 z" fill="#fff"/>
<rect x="874.8" y="48.4" width="25.2" height="25.2" fill="#8b8f96"/>
<rect x="874.8" y="48.4" width="25.2" height="4" fill="#6d7179"/>
<g fill="#5c6068">
<rect x="877.0" y="55.0" width="4" height="4"/><rect x="877.0" y="60.5" width="4" height="4"/><rect x="877.0" y="66.0" width="4" height="4"/><rect x="882.5" y="55.0" width="4" height="4"/><rect x="882.5" y="60.5" width="4" height="4"/><rect x="882.5" y="66.0" width="4" height="4"/><rect x="888.0" y="55.0" width="4" height="4"/><rect x="888.0" y="60.5" width="4" height="4"/><rect x="888.0" y="66.0" width="4" height="4"/><rect x="893.5" y="55.0" width="4" height="4"/><rect x="893.5" y="60.5" width="4" height="4"/><rect x="893.5" y="66.0" width="4" height="4"/>
</g>
<rect x="889" y="65.5" width="2.2" height="6" rx="1" fill="#2a6fb0"/>
<circle cx="895.9" cy="54.9" r="7" fill="#2190e8"/>
<path d="M895.9,50.8 l-2.8,3.2 h1.8 v5 h2 v-5 h1.8 z" fill="#fff"/>
<!-- inspecter -->
<g stroke="#a9adb4" stroke-width="1.4"><line x1="934" y1="54.2" x2="934" y2="62.3"/><line x1="958.9" y1="54.2" x2="958.9" y2="62.3"/></g>
<path d="M935.5,58.3 H957.5 M935.5,58.3 l3.5,-2.5 v5 z M957.5,58.3 l-3.5,-2.5 v5 z" stroke="#e8e8e8" stroke-width="1.1" fill="#e8e8e8"/>
<rect x="933.7" y="63.8" width="25.9" height="5.4" fill="#f3c766"/>
<path d="M936,63.8 v1.6 M939,63.8 v1.6 M942,63.8 v1.6 M945,63.8 v1.6 M948,63.8 v1.6 M951,63.8 v1.6 M954,63.8 v1.6 M957,63.8 v1.6" stroke="#9a7a3a" stroke-width="0.7"/>
<path d="M979.5,49.6 h-6.2 v6 M979.5,75 h-6.2 v-6" stroke="#5fa6dc" stroke-width="1.3" fill="none"/>
<rect x="976.4" y="51.6" width="9.6" height="9.8" fill="#4d6f92" stroke="#6fb6ec" stroke-width="0.9"/>
<rect x="976.4" y="62.6" width="9.6" height="9.8" fill="#4d6f92" stroke="#6fb6ec" stroke-width="0.9"/>
<line x1="986.6" y1="49" x2="986.6" y2="75.5" stroke="#6fb6ec" stroke-width="1.3"/>
<rect x="988" y="51.6" width="10.2" height="9.6" fill="#c3c4c7"/>
<rect x="988" y="62.8" width="10.2" height="9.6" fill="#c3c4c7"/>
<!-- dropdown triangles under group labels -->
<path d="M252.5,87.5 h5 l-2.5,3 z" fill="#c9cbce"/>
<path d="M471,87.5 h5 l-2.5,3 z" fill="#c9cbce"/>
<path d="M708,87.5 h5 l-2.5,3 z" fill="#c9cbce"/>
<path d="M902.5,87.5 h5 l-2.5,3 z" fill="#c9cbce"/>
<path d="M992,87.5 h5 l-2.5,3 z" fill="#c9cbce"/>
</svg>

<div class="tt" style="left:447.3px;transform:scaleX(0.9444);transform-origin:0 0;">Sans nom</div>
<div class="tt" style="left:961.7px;transform:scaleX(0.9444);transform-origin:0 0;">Sans nom*(1)</div>
<div class="concep" style="transform:scaleX(0.8843);transform-origin:0 0;">CONCEPTION</div>
<div class="tab" style="left:138.2px;transform:scaleX(0.9230);transform-origin:0 0;">SOLIDE</div><div class="tab" style="left:219.5px;transform:scaleX(0.9060);transform-origin:0 0;">SURFACIQUE</div><div class="tab" style="left:332.3px;transform:scaleX(0.9404);transform-origin:0 0;">MAILLAGE</div><div class="tab" style="left:427.5px;transform:scaleX(0.8832);transform-origin:0 0;">TÔLERIE</div><div class="tab" style="left:513.2px;transform:scaleX(0.9033);transform-origin:0 0;">PLASTIQUE</div><div class="tab" style="left:612px;transform:scaleX(0.8580);transform-origin:0 0;">GÉRER</div><div class="tab" style="left:688.6px;transform:scaleX(0.9728);transform-origin:0 0;">UTILITAIRES</div><div class="tab act" style="left:797.6px;transform:scaleX(0.9168);transform-origin:0 0;">ESQUISSE</div>
<div class="grp" style="left:216.3px;transform:scaleX(0.8568);transform-origin:0 0;">CRÉER</div><div class="grp" style="left:415.5px;transform:scaleX(0.9725);transform-origin:0 0;">MODIFIER</div><div class="grp" style="left:631.4px;transform:scaleX(0.9411);transform-origin:0 0;">CONTRAINTES</div><div class="grp" style="left:831.7px;transform:scaleX(0.9263);transform-origin:0 0;">CONFIGURER</div><div class="grp" style="left:932px;transform:scaleX(0.9211);transform-origin:0 0;">INSPECTER</div>
<div class="nvh"></div>
<div class="nvt" style="left:29.7px;top:111px;transform:scaleX(0.9115);transform-origin:0 0;">NAVIGATEUR</div>
<svg width="1024" height="827" viewBox="0 0 1024 827"><path d="M14,113.5 l-3,3 3,3 M17.5,113.5 l-3,3 3,3" stroke="#7e8590" stroke-width="1.3" fill="none"/><rect x="260.5" y="115.6" width="7.2" height="1.6" fill="#c0c4ca"/><rect x="37" y="133" width="172.5" height="17.8" fill="#3a4250"/><rect x="60" y="133" width="22" height="17.8" fill="#272d37"/><rect x="82.8" y="133" width="103.3" height="17.8" fill="#1f2530"/><rect x="187.8" y="133" width="21.7" height="17.8" fill="#363d4b"/><path d="M39.599999999999994,141.9 C42.8,135.4 50.8,135.4 54.0,141.9 C50.8,148.4 42.8,148.4 39.599999999999994,141.9 Z" fill="#d2d3d5"/><circle cx="46.8" cy="141.9" r="2.7" fill="#8e9298" stroke="#4a4f58" stroke-width="1.3"/><path d="M66.5,135.3 H76.5 V145.3 L73.5,148.3 H63.5 V138.3 Z" fill="#d6d6d6"/><path d="M63.5,138.3 L66.5,135.3 H76.5 L73.5,138.3 Z" fill="#f2f2f2"/><path d="M73.5,138.3 L76.5,135.3 V145.3 L73.5,148.3 Z" fill="#b9b9b9"/><circle cx="197.1" cy="141.8" r="4.3" fill="none" stroke="#fff" stroke-width="3.2"/><path d="M20.0,138.9 L24.3,143.3 L28.6,138.9" fill="none" stroke="#4a4a4a" stroke-width="2.8" stroke-linejoin="round"/><path d="M20.0,138.9 L24.3,143.3 L28.6,138.9" fill="none" stroke="#e8e8e8" stroke-width="0.9"/><rect x="53.5" y="155.2" width="170.9" height="17.4" fill="#3a4250"/><rect x="76.4" y="155.2" width="0.8" height="17.4" fill="#2f3541"/><circle cx="63.6" cy="163.8" r="5.6" fill="#a3a7ae"/><rect x="62.0" y="156.4" width="3.2" height="3.5" fill="#a3a7ae" transform="rotate(0 63.6 163.8)"/><rect x="62.0" y="156.4" width="3.2" height="3.5" fill="#a3a7ae" transform="rotate(45 63.6 163.8)"/><rect x="62.0" y="156.4" width="3.2" height="3.5" fill="#a3a7ae" transform="rotate(90 63.6 163.8)"/><rect x="62.0" y="156.4" width="3.2" height="3.5" fill="#a3a7ae" transform="rotate(135 63.6 163.8)"/><rect x="62.0" y="156.4" width="3.2" height="3.5" fill="#a3a7ae" transform="rotate(180 63.6 163.8)"/><rect x="62.0" y="156.4" width="3.2" height="3.5" fill="#a3a7ae" transform="rotate(225 63.6 163.8)"/><rect x="62.0" y="156.4" width="3.2" height="3.5" fill="#a3a7ae" transform="rotate(270 63.6 163.8)"/><rect x="62.0" y="156.4" width="3.2" height="3.5" fill="#a3a7ae" transform="rotate(315 63.6 163.8)"/><circle cx="63.6" cy="163.8" r="2.4" fill="#394150"/><path d="M36.2,161.20000000000002 L40.5,165.60000000000002 L44.8,161.20000000000002" fill="none" stroke="#4a4a4a" stroke-width="2.8" stroke-linejoin="round"/><path d="M36.2,161.20000000000002 L40.5,165.60000000000002 L44.8,161.20000000000002" fill="none" stroke="#e8e8e8" stroke-width="0.9"/><rect x="70.2" y="177.1" width="111.7" height="17.6" fill="#3a4250"/><rect x="92.2" y="177.1" width="0.8" height="17.6" fill="#2f3541"/><path d="M75,179.7 h7 l3.5,3.5 v7.5 h-10.5 z" fill="#e0e0e0"/><path d="M82,179.7 v3.5 h3.5" fill="#b0b0b0"/><rect x="73.8" y="190.6" width="12.6" height="1.6" fill="#f0b429"/><rect x="70.2" y="199.2" width="145" height="17.7" fill="#3a4250"/><rect x="92.2" y="199.2" width="0.8" height="17.7" fill="#2f3541"/><path d="M76.3,201.6 H86.3 V211.6 L83.3,214.6 H73.3 V204.6 Z" fill="#d6d6d6"/><path d="M73.3,204.6 L76.3,201.6 H86.3 L83.3,204.6 Z" fill="#f2f2f2"/><path d="M83.3,204.6 L86.3,201.6 V211.6 L83.3,214.6 Z" fill="#b9b9b9"/><rect x="53.6" y="221" width="119" height="17.6" fill="#3a4250"/><rect x="76" y="220.9" width="0.8" height="17.7" fill="#2f3541"/><path d="M56.2,223.5 h5 l1,1.5 h9 v11.9 h-15 z" fill="#d2d2d2"/><rect x="56.2" y="226.1" width="15" height="0.8" fill="#8d9097"/><path d="M38.599999999999994,225.5 L43.0,229.8 L38.599999999999994,234.10000000000002" fill="none" stroke="#4a4a4a" stroke-width="2.8" stroke-linejoin="round"/><path d="M38.599999999999994,225.5 L43.0,229.8 L38.599999999999994,234.10000000000002" fill="none" stroke="#e8e8e8" stroke-width="0.9"/><rect x="53.6" y="243.1" width="101.6" height="17.7" fill="#3a4250"/><rect x="76.2" y="243.1" width="0.8" height="17.7" fill="#2f3541"/><path d="M56.6,252 C59.6,245.7 67.6,245.7 70.6,252 C67.6,258.3 59.6,258.3 56.6,252 Z" fill="none" stroke="#c3c5c8" stroke-width="1.3"/><circle cx="63.6" cy="252" r="2.2" fill="none" stroke="#c3c5c8" stroke-width="1.2"/><line x1="58.6" y1="246" x2="68.6" y2="258" stroke="#c3c5c8" stroke-width="1.3"/><path d="M79,245.5 h5 l1,1.5 h9 v11.9 h-15 z" fill="#d2d2d2"/><rect x="79" y="248.1" width="15" height="0.8" fill="#8d9097"/><path d="M38.599999999999994,247.7 L43.0,252 L38.599999999999994,256.3" fill="none" stroke="#4a4a4a" stroke-width="2.8" stroke-linejoin="round"/><path d="M38.599999999999994,247.7 L43.0,252 L38.599999999999994,256.3" fill="none" stroke="#e8e8e8" stroke-width="0.9"/><rect x="53.6" y="265.2" width="112.6" height="17.6" fill="#3a4250"/><rect x="76.2" y="265.2" width="0.8" height="17.6" fill="#2f3541"/><path d="M56.4,274 C59.6,267.5 67.6,267.5 70.8,274 C67.6,280.5 59.6,280.5 56.4,274 Z" fill="#d2d3d5"/><circle cx="63.6" cy="274" r="2.7" fill="#8e9298" stroke="#4a4f58" stroke-width="1.3"/><path d="M79,267.6 h5 l1,1.5 h9 v11.9 h-15 z" fill="#d2d2d2"/><rect x="79" y="270.20000000000005" width="15" height="0.8" fill="#8d9097"/><path d="M38.599999999999994,269.7 L43.0,274 L38.599999999999994,278.3" fill="none" stroke="#4a4a4a" stroke-width="2.8" stroke-linejoin="round"/><path d="M38.599999999999994,269.7 L43.0,274 L38.599999999999994,278.3" fill="none" stroke="#e8e8e8" stroke-width="0.9"/></svg>
<div class="nvr b" style="left:90px;top:135.5px;transform:scaleX(0.9386);transform-origin:0 0;">(Non enregistré)</div>
<div class="nvr" style="left:84.2px;top:157.6px;transform:scaleX(0.9975);transform-origin:0 0;">Paramètres du document</div>
<div class="nvr" style="left:100.2px;top:179.6px;transform:scaleX(0.9927);transform-origin:0 0;">Unités : cm, g</div>
<div class="nvr" style="left:100.2px;top:201.7px;transform:scaleX(0.9937);transform-origin:0 0;">Conception de pièce</div>
<div class="nvr" style="left:84.1px;top:224.3px;transform:scaleX(0.9801);transform-origin:0 0;">Vues nommées</div>
<div class="nvr" style="left:106.7px;top:245.6px;transform:scaleX(1.0249);transform-origin:0 0;">Origine</div>
<div class="nvr" style="left:107px;top:267.6px;transform:scaleX(0.9729);transform-origin:0 0;">Esquisses</div>
<div class="ban"></div>
<svg width="1024" height="827" viewBox="0 0 1024 827"><path d="M534.2,115.5 v-1.8 a3.3,3.3 0 0 1 6.6,0 v1.8" stroke="#e0242c" stroke-width="1.8" fill="none"/><rect x="531.8" y="115.3" width="11.4" height="8.2" rx="1" fill="#e0242c"/><rect x="858.3" y="106" width="0.8" height="20" fill="#4c5462"/></svg>
<div class="bt b" style="left:550.5px;transform:scaleX(0.8902);transform-origin:0 0;">En lecture seule:</div>
<div class="bt" style="left:656px;transform:scaleX(1.0291);transform-origin:0 0;">La limite du document a été atteinte</div>
<div class="bt lnk" style="left:870px;transform:scaleX(0.9911);transform-origin:0 0;">Gérer les documents</div>
<div class="cmt"></div>
<div class="nvt" style="left:29.3px;top:808px;transform:scaleX(0.9132);transform-origin:0 0;">COMMENTAIRES</div>
<svg width="1024" height="827" viewBox="0 0 1024 827"><rect x="260" y="813.3" width="8" height="1.6" fill="#c0c4ca"/><rect x="263.2" y="810" width="1.6" height="8" fill="#c0c4ca"/><rect x="648.2" y="801.3" width="218.7" height="21.4" fill="#3a4250"/><g fill="none" stroke="#d6d8db" stroke-width="1.3"><path d="M656,805 a4,7.3 0 1 0 0.1,0"/><path d="M653.5,809.5 l-3,2.7 3,2.7"/><path d="M660.5,809.5 a7,3.2 0 0 1 3.5,2.7 a7,3.2 0 0 1 -3.5,2.7"/></g><path d="M656.2,809.5 l2.5,4 h-5 z" fill="#5fb0ea"/><path d="M671.5,809.5 h4.5 l-2.25,3 z" fill="#aeb2b8"/><rect x="682" y="807" width="14" height="10.5" fill="#d6d8db"/><rect x="684.5" y="809.5" width="9" height="5" fill="#5fb0ea"/><path d="M684,807 l3,-3.5 h6" stroke="#d6d8db" stroke-width="1.2" fill="none"/><g fill="#d6d8db"><rect x="708.6" y="806.5" width="2.3" height="8" rx="1.1"/><rect x="711.4" y="804.6" width="2.3" height="9" rx="1.1"/><rect x="714.2" y="804.8" width="2.3" height="9" rx="1.1"/><rect x="717" y="806.8" width="2.3" height="8" rx="1.1"/><path d="M708.6,812 h10.7 v3 q0,4.5 -4.5,5 h-2 q-2,0 -3.2,-1.8 l-3.8,-4.6 q-0.8,-1.2 0.4,-1.9 q1,-0.5 1.9,0.4 z"/></g><circle cx="735" cy="813" r="5" fill="none" stroke="#d6d8db" stroke-width="1.6"/><line x1="738.5" y1="816.5" x2="742" y2="820" stroke="#e3a34a" stroke-width="2"/><path d="M740,806 h5 M742.5,803.5 v5 M740,810 h5" stroke="#d6d8db" stroke-width="1"/><rect x="752.5" y="804" width="15.5" height="15.5" fill="none" stroke="#d6d8db" stroke-width="1" stroke-dasharray="2 1.5"/><circle cx="760.2" cy="811.8" r="6" fill="#5a606a" stroke="#d6d8db" stroke-width="1.2"/><path d="M774,809.5 h4.5 l-2.25,3 z" fill="#aeb2b8"/><rect x="784" y="805" width="15.4" height="11" fill="#d6d8db"/><rect x="786" y="807" width="11.4" height="7" fill="#9ea3aa"/><rect x="789" y="817" width="5.5" height="2.5" fill="#d6d8db"/><path d="M803,809.5 h4.5 l-2.25,3 z" fill="#aeb2b8"/><g fill="#d6d8db"><rect x="813.0" y="805.5" width="3.6" height="3.6"/><rect x="813.0" y="810.2" width="3.6" height="3.6"/><rect x="813.0" y="814.9" width="3.6" height="3.6"/><rect x="817.7" y="805.5" width="3.6" height="3.6"/><rect x="817.7" y="810.2" width="3.6" height="3.6"/><rect x="817.7" y="814.9" width="3.6" height="3.6"/><rect x="822.4" y="805.5" width="3.6" height="3.6"/><rect x="822.4" y="810.2" width="3.6" height="3.6"/><rect x="822.4" y="814.9" width="3.6" height="3.6"/></g><path d="M831,809.5 h4.5 l-2.25,3 z" fill="#aeb2b8"/><g fill="#d6d8db"><rect x="841" y="805" width="7" height="6"/><rect x="849" y="805" width="7" height="6"/><rect x="841" y="812.5" width="7" height="6"/><rect x="849" y="812.5" width="7" height="6"/></g><path d="M860,809.5 h4.5 l-2.25,3 z" fill="#aeb2b8"/></svg>
</body></html>
